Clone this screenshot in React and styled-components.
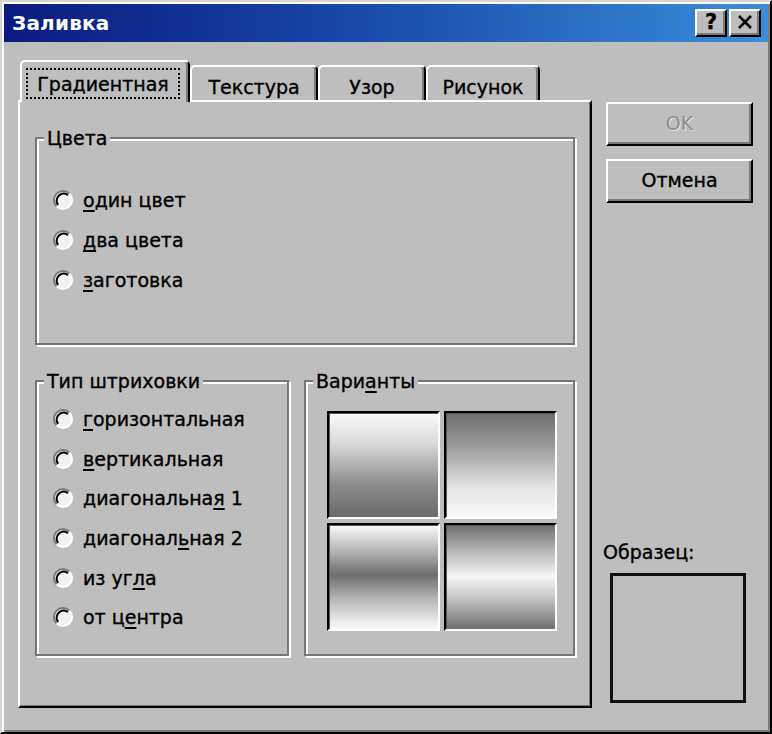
import React from "react"
import styled, { createGlobalStyle } from "styled-components"

const GlobalStyle = createGlobalStyle`
  html, body {
    margin: 0;
    padding: 0;
    background: #bebebe;
  }
  body {
    font-family: "DejaVu Sans", "Liberation Sans", sans-serif;
    font-size: 19px;
    color: #000;
    -webkit-text-stroke: 0.35px currentColor;
  }
`

const Window = styled.div`
  width: 772px;
  height: 734px;
  box-sizing: border-box;
  background: #bebebe;
  border: 2px solid;
  border-color: #d6d6d6 #000 #000 #d6d6d6;
  box-shadow: inset 2px 2px 0 #fff, inset -2px -2px 0 #7b7b7b;
  padding: 2px;
  display: flex;
  flex-direction: column;
`

const TitleBar = styled.div`
  height: 38px;
  flex: none;
  display: flex;
  align-items: center;
  padding: 0 7px 0 8px;
  background: linear-gradient(to right, #0b1a80 0%, #1848a8 45%, #3a8edb 100%);
`

const Title = styled.div`
  flex: 1;
  color: #fff;
  font-weight: bold;
  font-size: 20px;
  letter-spacing: 0.2px;
  -webkit-text-stroke: 0;
`

const TitleButton = styled.div`
  width: 32px;
  height: 28px;
  box-sizing: border-box;
  margin-left: ${p => (p.$gap ? "2px" : "0")};
  background: #bebebe;
  border: 2px solid;
  border-color: #fff #000 #000 #fff;
  box-shadow: inset -2px -2px 0 #7b7b7b;
  display: flex;
  align-items: center;
  justify-content: center;
  font-weight: bold;
  font-size: 21px;
  line-height: 1;
  padding-bottom: 2px;
`

const Content = styled.div`
  flex: 1;
  display: flex;
  gap: 14px;
  padding: 18px 0 0 14px;
`

const LeftColumn = styled.div`
  width: 574px;
  display: flex;
  flex-direction: column;
`

const TabRow = styled.div`
  height: 42px;
  display: flex;
  align-items: flex-end;
  padding-left: 2px;
  margin-bottom: -2px;
  position: relative;
  z-index: 1;
`

const Tab = styled.div`
  width: ${p => p.$width}px;
  height: ${p => (p.$active ? 42 : 35)}px;
  box-sizing: border-box;
  margin-bottom: ${p => (p.$active ? 0 : 2)}px;
  background: #bebebe;
  border: 2px solid;
  border-bottom: none;
  border-color: #fff #000 transparent #fff;
  border-radius: 5px 5px 0 0;
  box-shadow: inset -2px 0 0 #7b7b7b;
  display: flex;
  justify-content: center;
  padding-top: ${p => (p.$active ? 6 : 8)}px;
`

const FocusLabel = styled.span`
  display: inline-block;
  height: 31px;
  box-sizing: border-box;
  padding: 2px 9px 0 9px;
  border: 2px dotted #000;
  line-height: 24px;
  margin-left: -4px;
`

const TabLabel = styled.span`
  line-height: 24px;
`

const Panel = styled.div`
  height: 608px;
  box-sizing: border-box;
  border: 2px solid;
  border-color: #fff #000 #000 #fff;
  box-shadow: inset -1px -1px 0 #7b7b7b;
  padding: 35px 15px 0 15px;
  display: flex;
  flex-direction: column;
  gap: 35px;
`

const Group = styled.div`
  width: ${p => p.$width}px;
  height: ${p => p.$height}px;
  box-sizing: border-box;
  border: 2px solid #767676;
  box-shadow: inset 2px 2px 0 #fff, 2px 2px 0 #fff;
  display: flex;
  flex-direction: column;
  align-items: flex-start;
`

const Legend = styled.div`
  margin: -12px 0 0 7px;
  padding: 0 3px;
  background: #bebebe;
  line-height: 22px;
`

const RadioList = styled.div`
  display: flex;
  flex-direction: column;
  padding: ${p => p.$top}px 0 0 15px;
`

const RadioRow = styled.div`
  height: ${p => p.$row}px;
  display: flex;
  align-items: center;
  gap: 9px;
`

const Mnemonic = styled.u`
  text-decoration-thickness: 2px;
  text-underline-offset: 3px;
`

const LowerRow = styled.div`
  display: flex;
  gap: 15px;
`

const TileGrid = styled.div`
  display: grid;
  grid-template-columns: 113px 113px;
  grid-auto-rows: 108px;
  gap: 4px;
  margin: 19px 0 0 21px;
`

const Tile = styled.div`
  box-sizing: border-box;
  border: 2px solid;
  border-color: #000 #fff #fff #000;
  box-shadow: inset 1px 1px 0 #555;
  background: ${p => p.$fill};
`

const RightColumn = styled.div`
  width: 147px;
  display: flex;
  flex-direction: column;
  padding-top: 42px;
  padding-bottom: 27px;
`

const Button = styled.div`
  height: 44px;
  box-sizing: border-box;
  margin-bottom: ${p => (p.$gap ? 13 : 0)}px;
  border: 2px solid;
  border-color: #fff #000 #000 #fff;
  box-shadow: inset -2px -2px 0 #7b7b7b;
  display: flex;
  align-items: center;
  justify-content: center;
  color: ${p => (p.$disabled ? "#8e8e8e" : "#000")};
  -webkit-text-stroke: ${p => (p.$disabled ? "0" : "0.35px #000")};
  text-shadow: ${p => (p.$disabled ? "1px 1px 0 #e4e4e4" : "none")};
  padding-bottom: 2px;
`

const SampleLabel = styled.div`
  margin: auto 0 10px -3px;
  line-height: 22px;
`

const SampleBox = styled.div`
  width: 136px;
  height: 130px;
  box-sizing: border-box;
  margin-left: 4px;
  border: 3px solid #111;
  background: #bdbdbd;
`

const RadioIcon = () => (
  <svg width="22" height="22" viewBox="0 0 22 22">
    <circle cx="11" cy="11" r="9" fill="#f2f2f2" />
    <path d="M17.4 4.6 A9 9 0 0 0 4.6 17.4" fill="none" stroke="#7b7b7b" strokeWidth="2" />
    <path d="M15.9 6.1 A7 7 0 0 0 6.1 15.9" fill="none" stroke="#000" strokeWidth="2.2" />
    <path d="M4.6 17.4 A9 9 0 0 0 17.4 4.6" fill="none" stroke="#fff" strokeWidth="2" />
  </svg>
)

const CloseIcon = () => (
  <svg width="16" height="14" viewBox="0 0 16 14">
    <path d="M2 1 L14 13 M14 1 L2 13" stroke="#000" strokeWidth="2.6" />
  </svg>
)

const Label = ({ text, at }) => {
  if (at < 0) return <span>{text}</span>
  return (
    <span>
      {text.slice(0, at)}
      <Mnemonic>{text[at]}</Mnemonic>
      {text.slice(at + 1)}
    </span>
  )
}

const colorOptions = [
  { text: "один цвет", at: 0 },
  { text: "два цвета", at: 0 },
  { text: "заготовка", at: 0 },
]

const hatchOptions = [
  { text: "горизонтальная", at: 0 },
  { text: "вертикальная", at: 0 },
  { text: "диагональная 1", at: 11 },
  { text: "диагональная 2", at: 8 },
  { text: "из угла", at: 5 },
  { text: "от центра", at: 4 },
]

const tiles = [
  "linear-gradient(#fbfbfb 0%, #d8d8d8 30%, #8a8a8a 70%, #6a6a6a 100%)",
  "linear-gradient(#6e6e6e 0%, #a0a0a0 35%, #e2e2e2 70%, #fbfbfb 100%)",
  "linear-gradient(#fbfbfb 0%, #b4b4b4 25%, #6e6e6e 48%, #b8b8b8 72%, #fbfbfb 100%)",
  "linear-gradient(#6e6e6e 0%, #b8b8b8 25%, #f6f6f6 50%, #b8b8b8 75%, #6e6e6e 100%)",
]

const tabs = [
  { name: "Текстура", width: 128 },
  { name: "Узор", width: 108 },
  { name: "Рисунок", width: 114 },
]

const RadioGroup = ({ options, top, row }) => (
  <RadioList $top={top}>
    {options.map(o => (
      <RadioRow key={o.text} $row={row}>
        <RadioIcon />
        <Label text={o.text} at={o.at} />
      </RadioRow>
    ))}
  </RadioList>
)

export default function App() {
  return (
    <>
      <GlobalStyle />
      <Window>
        <TitleBar>
          <Title>Заливка</Title>
          <TitleButton>?</TitleButton>
          <TitleButton $gap>
            <CloseIcon />
          </TitleButton>
        </TitleBar>
        <Content>
          <LeftColumn>
            <TabRow>
              <Tab $active $width={170}>
                <FocusLabel>Градиентная</FocusLabel>
              </Tab>
              {tabs.map(t => (
                <Tab key={t.name} $width={t.width}>
                  <TabLabel>{t.name}</TabLabel>
                </Tab>
              ))}
            </TabRow>
            <Panel>
              <Group $width={540} $height={208}>
                <Legend>Цвета</Legend>
                <RadioGroup options={colorOptions} top={31} row={40} />
              </Group>
              <LowerRow>
                <Group $width={254} $height={276}>
                  <Legend>Тип штриховки</Legend>
                  <RadioGroup options={hatchOptions} top={7} row={39.7} />
                </Group>
                <Group $width={271} $height={276}>
                  <Legend>
                    <Label text="Варианты" at={4} />
                  </Legend>
                  <TileGrid>
                    {tiles.map(fill => (
                      <Tile key={fill} $fill={fill} />
                    ))}
                  </TileGrid>
                </Group>
              </LowerRow>
            </Panel>
          </LeftColumn>
          <RightColumn>
            <Button $disabled $gap>OK</Button>
            <Button>Отмена</Button>
            <SampleLabel>Образец:</SampleLabel>
            <SampleBox />
          </RightColumn>
        </Content>
      </Window>
    </>
  )
}
